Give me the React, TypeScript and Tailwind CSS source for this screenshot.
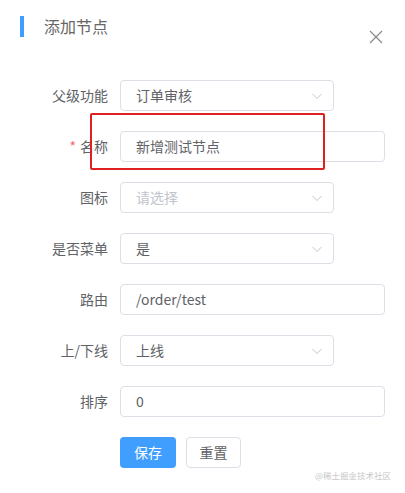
import React from 'react';

const font = { fontFamily: '"Noto Sans CJK SC", "Noto Sans", sans-serif' };

const Chevron = () => (
  <svg width="12" height="12" viewBox="0 0 12 12" fill="none" className="text-[#c0c4cc]">
    <path d="M1.5 4l4.5 4.5L10.5 4" stroke="currentColor" strokeWidth="1" />
  </svg>
);

const Select = ({ value, placeholder }: { value?: string; placeholder?: string }) => (
  <div className="flex h-[31px] w-[214px] items-center justify-between rounded border border-[#dcdfe6] bg-white pl-[15px] pr-[10px]">
    <span className={value ? 'text-[#606266]' : 'text-[#c0c4cc]'}>{value || placeholder}</span>
    <Chevron />
  </div>
);

const Input = ({ value }: { value: string }) => (
  <div className="flex h-[31px] w-[265px] items-center rounded border border-[#dcdfe6] bg-white pl-[15px] text-[#606266]">
    {value}
  </div>
);

const Row = ({ label, required, children }: { label: string; required?: boolean; children: React.ReactNode }) => (
  <div className="flex h-[31px] items-center">
    <div className="w-[120px] pr-3 text-right text-[14px] text-[#606266]">
      {required && <span className="mr-1 text-[#f56c6c]">*</span>}
      {label}
    </div>
    {children}
  </div>
);

export default function App() {
  return (
    <div className="relative h-[493px] w-[405px] overflow-hidden bg-white text-[14px]" style={font}>
      <div className="flex items-start justify-between pl-5 pr-[22px] pt-4">
        <div className="flex items-center">
          <div className="h-[21px] w-[4px] bg-[#409eff]" />
          <span className="ml-5 text-[16px] leading-[21px] text-[#666]">添加节点</span>
        </div>
        <svg width="14" height="14" viewBox="0 0 14 14" className="mt-[14px] text-[#888]">
          <path d="M1 1l12 12M13 1L1 13" stroke="currentColor" strokeWidth="1.2" />
        </svg>
      </div>

      <div className="mt-[36px] flex flex-col gap-5">
        <Row label="父级功能"><Select value="订单审核" /></Row>
        <Row label="名称" required><Input value="新增测试节点" /></Row>
        <Row label="图标"><Select placeholder="请选择" /></Row>
        <Row label="是否菜单"><Select value="是" /></Row>
        <Row label="路由"><Input value="/order/test" /></Row>
        <Row label="上/下线"><Select value="上线" /></Row>
        <Row label="排序"><Input value="0" /></Row>
        <div className="flex gap-[10px] pl-[120px]">
          <button className="h-[31px] w-[56px] rounded bg-[#409eff] text-white">保存</button>
          <button className="h-[31px] w-[55px] rounded border border-[#dcdfe6] bg-white text-[#606266]">重置</button>
        </div>
      </div>

      <div className="absolute left-[90px] top-[113px] h-[57px] w-[235px] rounded-[2px] border-2 border-[#e02020]" />

      <div className="absolute left-[315px] top-[469px] whitespace-nowrap text-[8.5px] text-[#c8c8c8]">@稀土掘金技术社区</div>
    </div>
  );
}
